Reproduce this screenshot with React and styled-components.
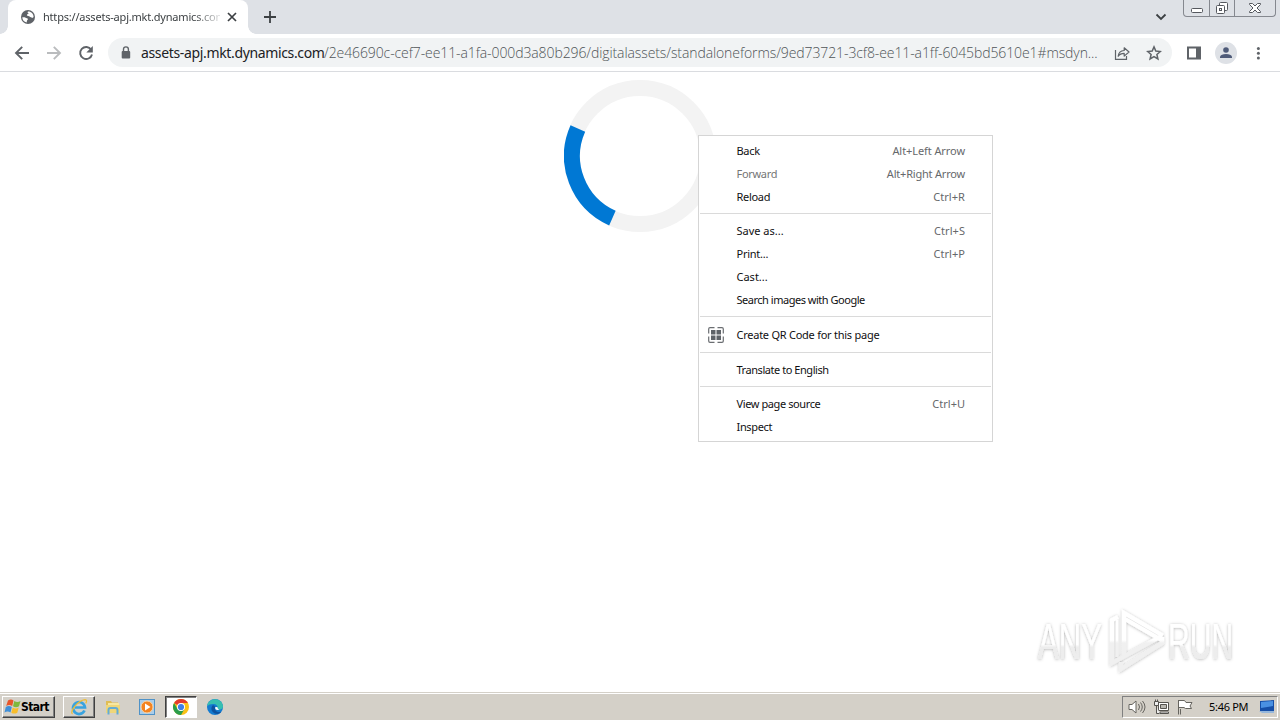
import React from "react";
import styled, { createGlobalStyle } from "styled-components";

const Global = createGlobalStyle`
  * { box-sizing: border-box; }
  html, body { margin: 0; padding: 0; overflow: hidden; background: #fff; }
  body { font-family: "Noto Sans", "Liberation Sans", sans-serif; font-size: 11px; }
  svg { display: block; flex: none; }
`;
const Screen = styled.div`
  position: relative; width: 1280px; height: 720px; display: flex; flex-direction: column; overflow: hidden;
`;
const TabStrip = styled.div`
  height: 34px; background: #dee1e6; display: flex; align-items: flex-start; padding-left: 8px; flex: none;
`;
const Tab = styled.div`
  position: relative; width: 240px; height: 34px; background: #fff; border-radius: 8px 8px 0 0;
  display: flex; align-items: center; padding-left: 12px;
  &::before, &::after {
    content: ""; position: absolute; bottom: 0; width: 8px; height: 8px;
  }
  &::before { left: -8px; background: radial-gradient(circle at 0 0, transparent 7.5px, #fff 8px); }
  &::after { right: -8px; background: radial-gradient(circle at 100% 0, transparent 7.5px, #fff 8px); }
`;
const TabTitle = styled.div`
  width: 177px; margin: 0 5px 0 7px; overflow: hidden; white-space: nowrap; color: #3c4043;
  font-size: 11px; line-height: 16px; letter-spacing: -0.2px;
  mask-image: linear-gradient(90deg, #000 150px, transparent 182px);
`;
const NewTab = styled.div`margin: 9px 0 0 14px;`;
const StripEnd = styled.div`
  margin-left: auto; display: flex; align-items: flex-start; gap: 15px; padding-right: 4px;
  & > svg:first-child { margin-top: 11px; }
`;
const WindowButtons = styled.div`
  display: flex; height: 17px; border: 1px solid #85888f; border-top: 0; border-radius: 0 0 4px 4px;
`;
const WinButton = styled.div`
  width: ${p => p.$w}px; display: flex; justify-content: center;
  & + & { border-left: 1px solid #85888f; }
`;
const Toolbar = styled.div`
  height: 38px; flex: none; border-bottom: 1px solid #dadce0; display: flex; align-items: center;
  padding: 0 14px 0 14px; background: #fff;
`;
const NavButtons = styled.div`display: flex; gap: 16px; width: 94px;`;
const Omnibox = styled.div`
  width: 1064px; height: 29px; border-radius: 15px; background: #f1f3f4; display: flex; align-items: center; padding: 0 10px;
`;
const Url = styled.div`
  width: 973px; margin-left: 7px; white-space: nowrap; color: #4f5357; font-size: 14px; line-height: 20px;
  display: flex;
`;
const Domain = styled.span`color: #202124; width: 183px; letter-spacing: -0.35px;`;
const Path = styled.span`font-family: "Open Sans", "Noto Sans", sans-serif; font-weight: 300; letter-spacing: -0.1px;`;
const OmniActions = styled.div`display: flex; gap: 16px;`;
const ToolbarEnd = styled.div`display: flex; align-items: center; margin-left: 14px; gap: 13px;`;
const Avatar = styled.div`
  width: 22px; height: 22px; border-radius: 50%; background: #dee1e6; display: flex; align-items: center; justify-content: center;
`;
const Page = styled.main`
  flex: 1; display: flex; justify-content: center; padding-top: 8px; background: #fff;
`;
const Menu = styled.div`
  position: absolute; left: 698px; top: 135px; width: 295px; height: 307px; background: #fff;
  border: 1px solid #d5d5d5; padding: 3px 1px;
`;
const MenuRow = styled.div`
  height: ${p => p.$h || 23}px; display: flex; align-items: center; padding: 0 26px 0 8px; white-space: nowrap;
  color: ${p => (p.$off ? "#757575" : "#101012")};
`;
const IconSlot = styled.div`width: 28.500px; flex: none;`;
const Label = styled.span`letter-spacing: ${p => p.$ls || 0}px;`;
const Shortcut = styled.span`margin-left: auto; color: #66686b; letter-spacing: ${p => p.$ls || 0}px;`;
const Separator = styled.div`height: 1px; margin: 5px 0; background: #dadada;`;
const Watermark = styled.div`position: absolute; left: 1030px; top: 600px;`;
const Taskbar = styled.div`
  height: 28px; flex: none; background: #d4d0c8; border-top: 1px solid #d4d0c8; box-shadow: inset 0 1px #fff;
  display: flex; align-items: center; padding: 0 2px 0 2px;
`;
const StartButton = styled.div`
  width: 53px; height: 22px; display: flex; align-items: center; padding-left: 1px;
  border: 1px solid; border-color: #fff #404040 #404040 #fff; box-shadow: inset -1px -1px #808080;
  font: bold 12px "DejaVu Sans Condensed", "DejaVu Sans", sans-serif; letter-spacing: -0.550px; color: #000;
`;
const Apps = styled.div`display: flex; margin-left: 8px; gap: 2px;`;
const AppButton = styled.div`
  width: 32px; height: 22px; display: flex; align-items: center; justify-content: center;
  border: 1px solid transparent;
  ${p => p.$state === "open" && "border-color: #fff #404040 #404040 #fff; box-shadow: inset -1px -1px #808080;"}
  ${p => p.$state === "active" && "border-color: #404040 #fff #fff #404040; background: #fff; box-shadow: inset 1px 1px #808080;"}
`;
const Tray = styled.div`
  margin-left: auto; width: 156px; height: 22px; border: 1px solid; border-color: #808080 #fff #fff #808080;
  display: flex; align-items: center; padding-left: 5px; gap: 7px;
`;
const Clock = styled.span`width: 40px; margin: 0 3px 0 8px; white-space: nowrap; letter-spacing: -0.300px; color: #000;`;

const Globe = () => (
  <svg width="16" height="16" viewBox="0 0 16 16">
    <circle cx="8" cy="8" r="7" fill="#5f6368" />
    <path d="M2.300 8.200c1.100.1 2.400-.2 3.300.5.9.6 1.900.2 2.300 1.100.4.8-.8 1.200-1 2.100l-.2 1.500C4.100 13 2.200 10.800 2.300 8.200zM8 2.500c-.8 1-.3 1.500.6 1.600-.2 1.200-1.600 1-1.700 2.100.2 1.200 2.300.5 3 1.600.5.8 1.700.4 2.200 1.300.5-.7 1.300-.5 1.500-1.100C13.600 4.800 11 2.300 8 2.500z" fill="#fff" />
  </svg>
);
const Cross = () => (
  <svg width="14" height="14" viewBox="0 0 14 14"><path d="M3 3l8 8M11 3l-8 8" stroke="#3c4043" strokeWidth="1.7" /></svg>
);
const Arrow = ({ color, flip }) => (
  <svg width="16" height="16" viewBox="0 0 16 16">
    <path transform={flip ? "translate(16 0) scale(-1 1)" : undefined} d="M15 8H2.500M8.200 1.800L2 8l6.200 6.200" fill="none" stroke={color} strokeWidth="1.900" />
  </svg>
);
const Reload = () => (
  <svg width="16" height="16" viewBox="0 0 16 16">
    <path d="M13.200 4.700A6 6 0 1 0 14 9.500" fill="none" stroke="#5f6368" strokeWidth="1.900" /><path d="M14.800 1v6.500H8.300z" fill="#5f6368" />
  </svg>
);
const Lock = () => (
  <svg width="16" height="16" viewBox="0 0 16 16">
    <rect x="3.700" y="6" width="8.500" height="7.500" rx="1" fill="#5f6368" /><path d="M5.500 6.500V4.300a2.450 2.450 0 0 1 4.900 0v2.200" fill="none" stroke="#5f6368" strokeWidth="1.400" />
  </svg>
);
const Share = () => (
  <svg width="16" height="16" viewBox="0 0 16 16" fill="none" stroke="#5f6368" strokeWidth="1.200">
    <path d="M1.500 5v9.400h11V11" /><path d="M4.200 11.300c.3-3.900 2.400-5.700 6-5.800V2.800L15 7l-4.800 4.100V8.400c-2.700 0-4.700.8-6 2.900z" strokeLinejoin="round" />
  </svg>
);
const Star = () => (
  <svg width="16" height="16" viewBox="0 0 16 16">
    <path d="M8 1.900l1.800 4.200 4.500.4-3.400 3 1 4.500L8 11.600 4.100 14l1-4.500-3.400-3 4.500-.4z" fill="none" stroke="#5f6368" strokeWidth="1.500" />
  </svg>
);
const Dots = () => (
  <svg width="16" height="16" viewBox="0 0 16 16" fill="#5f6368"><circle cx="8.400" cy="3.500" r="1.500" /><circle cx="8.400" cy="8.300" r="1.500" /><circle cx="8.400" cy="13" r="1.500" /></svg>
);
const QrIcon = () => (
  <svg width="16" height="16" viewBox="0 0 16 16">
    <path d="M6.500.7H2Q.7.700.7 2v4.500M9.500.7H14q1.300 0 1.300 1.300v4.500M.7 9.500V14q0 1.300 1.300 1.300h4.500M15.300 9.500V14q0 1.300-1.300 1.300H9.500" fill="none" stroke="#6b6e72" strokeWidth="1.200" />
    <path d="M3 3h4.500v4.500H3zM8.500 3H13v4.500H8.500zM3 8.500h4.500V13H3zM8.500 8.500H13V13H8.500z" fill="#5f6368" />
  </svg>
);
const Spinner = () => (
  <svg width="152" height="152" viewBox="-76 -76 152 152" fill="none" strokeWidth="16">
    <circle r="68" stroke="#f3f3f3" />
    <path d="M-27.600 62.150A68 68 0 0 1-62.150-27.600" stroke="#0078d4" />
  </svg>
);
const AnyRun = () => (
  <svg width="210" height="80" viewBox="0 0 210 80">
    <defs>
      <filter id="glow" x="-10%" y="-20%" width="120%" height="140%"><feDropShadow dx="0" dy="0.500" stdDeviation="1.500" floodColor="#000" floodOpacity=".3" /></filter>
      <linearGradient id="fade" gradientUnits="userSpaceOnUse" x1="0" y1="10" x2="0" y2="70"><stop offset=".5" stopColor="#fff" /><stop offset=".55" stopColor="#f0f0f0" /></linearGradient>
      <linearGradient id="fadeText" x1="0" y1="0" x2="0" y2="1"><stop offset=".55" stopColor="#fff" /><stop offset=".6" stopColor="#ededed" /></linearGradient>
    </defs>
    <g filter="url(#glow)" fill="url(#fadeText)" fontFamily="Liberation Sans, sans-serif" fontWeight="400" fontSize="50">
      <text transform="translate(8 59) scale(.62 1)" textLength="103" lengthAdjust="spacingAndGlyphs">ANY</text>
      <text transform="translate(138 59) scale(.62 1)" textLength="105" lengthAdjust="spacingAndGlyphs">RUN</text>
      <g fill="none" stroke="url(#fade)" strokeWidth="4.200">
        <path d="M94 55V13L131 34.500L129 38.500L95 19" />
        <path d="M88 17L82 20V63L127 38.500" />
        <path d="M87 20V57" strokeWidth="2.500" />
        <path d="M91 62V69L132 43V37" />
      </g>
    </g>
  </svg>
);
const WinFlag = () => (
  <svg width="17" height="17" viewBox="0 0 17 17">
    <path d="M4 2.500q3-2 5.500 0L8.200 8q-3-2-6 0z" fill="#e8562a" /><path d="M10.300 3q3 1.800 6.200 0L15 8.300q-3 1.800-6 0z" fill="#7fb83c" />
    <path d="M1.800 9q3-2 6 0L6.500 14.500q-3-2-6 0z" fill="#3f8fd8" /><path d="M8.700 9.500q3 1.800 6 0l-1.400 5.200q-3 1.800-6 0z" fill="#f8bd2b" />
  </svg>
);
const IeIcon = () => (
  <svg width="18" height="18" viewBox="0 0 18 18">
    <path d="M14.500 12.500a6 6 0 1 1 .5-3H5" fill="none" stroke="#39a3df" strokeWidth="2.700" />
    <path d="M2.500 16C-1 14 8 2.500 15 1.700c2.500 0 1.500 2.500.7 3.600" fill="none" stroke="#edbc35" strokeWidth="1.300" />
  </svg>
);
const FolderIcon = () => (
  <svg width="18" height="18" viewBox="0 0 18 18">
    <path d="M2 3h5l1 1.500h6V14H2z" fill="#e0bd55" /><path d="M4 5h11v8H4z" fill="#f7e7a0" /><path d="M2 7h14v8H2z" fill="#efd679" />
    <path d="M4.500 16.500V12q0-2 2-2h5q2 0 2 2v4.500" fill="none" stroke="#64acd4" strokeWidth="2" />
  </svg>
);
const PlayerIcon = () => (
  <svg width="18" height="18" viewBox="0 0 18 18">
    <rect x="1.500" y="1.500" width="15" height="15" fill="#a9cdea" stroke="#4f92c7" /><circle cx="9" cy="9" r="6" fill="#f38320" stroke="#fbd4a4" /><path d="M7 5.500l5.500 3.500L7 12.500z" fill="#fff" />
  </svg>
);
const ChromeIcon = () => (
  <svg width="18" height="18" viewBox="0 0 18 18">
    <circle cx="9" cy="9" r="8" fill="#fbc116" /><path d="M9 9L2.070 5A8 8 0 0 1 15.930 5H9z" fill="#e33b2e" /><path d="M2.070 5A8 8 0 0 0 9 17l3.500-6H5.500z" fill="#2a9d4b" />
    <circle cx="9" cy="9" r="4" fill="#fff" /><circle cx="9" cy="9" r="3.100" fill="#3f7fe8" />
  </svg>
);
const EdgeIcon = () => (
  <svg width="18" height="18" viewBox="0 0 18 18">
    <circle cx="9" cy="9" r="8" fill="#147bd0" /><path d="M1.200 8C2-.5 15.500-1.500 17 8c.4 3-3.500 4.500-6 3 2-3-1-5.500-4-5Q3 6 1.200 8z" fill="#37bfb0" />
    <path d="M6.500 7.500c-3 4 .5 8.500 5 8.500q2.500-.3 4-2.500c-4 1.500-7-.5-6.500-3.500 0-2-1-3-2.500-2.500z" fill="#0e529e" /><path d="M9 9.500q.7-1 2.500-.2-.2 1.700 2 2.200-2.500 1-4-.2z" fill="#fff" />
  </svg>
);
const Speaker = () => (
  <svg width="18" height="16" viewBox="0 0 18 16" fill="none" stroke="#66645f">
    <path d="M1 5.500h3L8 2v12l-4-3.500H1z" fill="#fff" /><path d="M10.500 5q2 3 0 6M12.500 3.500q3.500 4.500 0 9M14.500 2q5 6 0 12" />
  </svg>
);
const Network = () => (
  <svg width="17" height="16" viewBox="0 0 17 16" stroke="#55534f">
    <path d="M5.500 3.500h10v8h-10z" fill="#fff" /><path d="M7.500 5.500h6v4h-6z" fill="#b9b7b1" /><path d="M7 14.500h8.500v-1.500H7z" fill="#fff" /><path d="M1.500 2.500v4h4v-4zM2.500.5v2M4.500.5v2M3.500 6.500v8h3" fill="#eee" />
  </svg>
);
const Flag = () => (
  <svg width="17" height="16" viewBox="0 0 17 16" stroke="#66645f" fill="#fff"><path d="M1.500 1v14.500M3.500 15.500V10M1.500 1.500h6l1.500 2h6l-2 3.500 1.500 2.500h-6L7 8.500H1.500z" /></svg>
);
const Desktop = () => (
  <svg width="17" height="16" viewBox="0 0 17 16"><path d="M1 2l14-1v11H1z" fill="#164fa7" /><path d="M2 3l12-1v5L2 9z" fill="#4a91e2" /><path d="M0 12h15v2H3z" fill="#96b7db" /></svg>
);

const rows = [
  { t: "Back", ls: -0.3, k: "Alt+Left Arrow", ks: -0.08 },
  { t: "Forward", ls: -0.3, k: "Alt+Right Arrow", ks: -0.2, off: true },
  { t: "Reload", ls: -0.3, k: "Ctrl+R", ks: 0.05 },
  null,
  { t: "Save as...", k: "Ctrl+S", ks: 0.05 },
  { t: "Print...", ls: -0.25, k: "Ctrl+P", ks: 0.05 },
  { t: "Cast..." },
  { t: "Search images with Google", ls: -0.48 },
  null,
  { t: "Create QR Code for this page", ls: -0.25, icon: true, h: 25 },
  null,
  { t: "Translate to English", ls: -0.45 },
  null,
  { t: "View page source", ls: -0.4, k: "Ctrl+U" },
  { t: "Inspect", ls: -0.35 },
];

export default function App() {
  return (
    <Screen>
      <Global />
      <TabStrip>
        <Tab>
          <Globe />
          <TabTitle>https://assets-apj.mkt.dynamics.com</TabTitle>
          <Cross />
        </Tab>
        <NewTab><svg width="16" height="16" viewBox="0 0 16 16"><path d="M8 2v12M2 8h12" stroke="#3c4043" strokeWidth="1.800" /></svg></NewTab>
        <StripEnd>
          <svg width="14" height="12" viewBox="0 0 14 12"><path d="M2.500 3.500L7 8l4.500-4.500" fill="none" stroke="#3c4043" strokeWidth="1.800" /></svg>
          <WindowButtons>
            <WinButton $w={25}><svg width="14" height="16" viewBox="0 0 14 16"><rect x="1.500" y="8.500" width="11" height="4" rx="1" fill="#fff" stroke="#55585e" /></svg></WinButton>
            <WinButton $w={25}><svg width="14" height="16" viewBox="0 0 14 16" fill="#fff" stroke="#55585e"><rect x="4.500" y="2.500" width="8" height="8" rx="1" /><rect x="1.500" y="5.500" width="8" height="8" rx="1" /><rect x="4.500" y="8.500" width="2" height="2" /></svg></WinButton>
            <WinButton $w={41}><svg width="14" height="16" viewBox="0 0 14 16"><path d="M1.500 3.500h3L7 6l2.500-2.500h3v1L9 8l3.500 3.500v1h-3L7 10l-2.500 2.500h-3v-1L5 8 1.500 4.500z" fill="#fff" stroke="#55585e" /></svg></WinButton>
          </WindowButtons>
        </StripEnd>
      </TabStrip>
      <Toolbar>
        <NavButtons><Arrow color="#5f6368" /><Arrow color="#babcbe" flip /><Reload /></NavButtons>
        <Omnibox>
          <Lock />
          <Url><Domain>assets-apj.mkt.dynamics.com</Domain><Path>/2e46690c-cef7-ee11-a1fa-000d3a80b296/digitalassets/standaloneforms/9ed73721-3cf8-ee11-a1ff-6045bd5610e1#msdyn...</Path></Url>
          <OmniActions><Share /><Star /></OmniActions>
        </Omnibox>
        <ToolbarEnd>
          <svg width="16" height="16" viewBox="0 0 16 16"><path d="M1 1.500h14v13H1zM3 3.500v9h7v-9z" fillRule="evenodd" fill="#5f6368" /></svg>
          <Avatar><svg width="14" height="14" viewBox="0 0 14 14" fill="#4e5a78"><circle cx="7" cy="4" r="2.800" /><path d="M1 12v-1.500Q2 8 7 8t6 2.500V12z" /></svg></Avatar>
          <Dots />
        </ToolbarEnd>
      </Toolbar>
      <Page><Spinner /></Page>
      <Menu>
        {rows.map((r, i) => r ? (
          <MenuRow key={i} $h={r.h} $off={r.off}>
            <IconSlot>{r.icon && <QrIcon />}</IconSlot>
            <Label $ls={r.ls}>{r.t}</Label>
            {r.k && <Shortcut $ls={r.ks}>{r.k}</Shortcut>}
          </MenuRow>
        ) : <Separator key={i} />)}
      </Menu>
      <Watermark><AnyRun /></Watermark>
      <Taskbar>
        <StartButton><WinFlag />Start</StartButton>
        <Apps>
          <AppButton $state="open"><IeIcon /></AppButton>
          <AppButton><FolderIcon /></AppButton>
          <AppButton><PlayerIcon /></AppButton>
          <AppButton $state="active"><ChromeIcon /></AppButton>
          <AppButton><EdgeIcon /></AppButton>
        </Apps>
        <Tray><Speaker /><Network /><Flag /><Clock>5:46 PM</Clock><Desktop /></Tray>
      </Taskbar>
    </Screen>
  );
}
